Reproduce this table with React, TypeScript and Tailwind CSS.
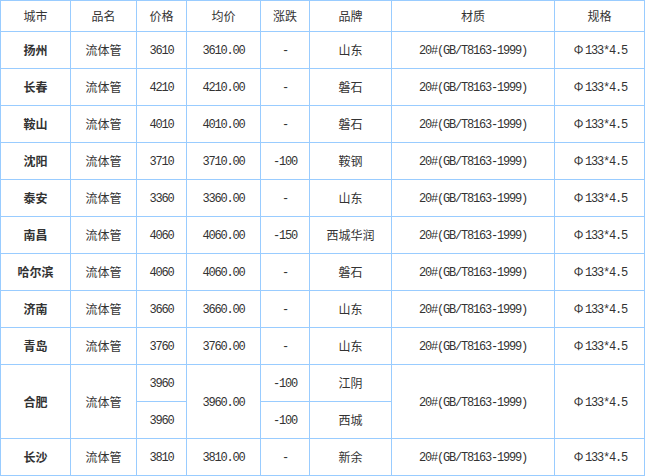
import React from 'react';

type Row = {
  city: string;
  prices: { price: string; change: string; brand: string }[];
  avg: string;
};

const rows: Row[] = [
  { city: '扬州', avg: '3610.00', prices: [{ price: '3610', change: '-', brand: '山东' }] },
  { city: '长春', avg: '4210.00', prices: [{ price: '4210', change: '-', brand: '磐石' }] },
  { city: '鞍山', avg: '4010.00', prices: [{ price: '4010', change: '-', brand: '磐石' }] },
  { city: '沈阳', avg: '3710.00', prices: [{ price: '3710', change: '-100', brand: '鞍钢' }] },
  { city: '泰安', avg: '3360.00', prices: [{ price: '3360', change: '-', brand: '山东' }] },
  { city: '南昌', avg: '4060.00', prices: [{ price: '4060', change: '-150', brand: '西城华润' }] },
  { city: '哈尔滨', avg: '4060.00', prices: [{ price: '4060', change: '-', brand: '磐石' }] },
  { city: '济南', avg: '3660.00', prices: [{ price: '3660', change: '-', brand: '山东' }] },
  { city: '青岛', avg: '3760.00', prices: [{ price: '3760', change: '-', brand: '山东' }] },
  {
    city: '合肥',
    avg: '3960.00',
    prices: [
      { price: '3960', change: '-100', brand: '江阴' },
      { price: '3960', change: '-100', brand: '西城' },
    ],
  },
  { city: '长沙', avg: '3810.00', prices: [{ price: '3810', change: '-', brand: '新余' }] },
];

const cell = 'border border-[#99ccff] text-center align-middle p-0';
const mono = "font-['Liberation_Mono',monospace] tracking-[-1.2px]";

function Num({ children }: { children: React.ReactNode }) {
  return <span className={mono}>{children}</span>;
}

function Spec() {
  return (
    <span>
      <span className="inline-block w-[13px] text-center font-['Noto_Sans_CJK_SC',sans-serif]">Φ</span>
      <Num>133*4.5</Num>
    </span>
  );
}

export default function App() {
  return (
    <div className="bg-white w-[645px] h-[476px] overflow-hidden">
      <table className="border-collapse w-[644px] table-fixed text-[12px] leading-none text-[#333] font-['Noto_Sans_CJK_SC','Noto_Sans',sans-serif]">
        <colgroup>
          <col className="w-[70px]" />
          <col className="w-[66px]" />
          <col className="w-[50px]" />
          <col className="w-[74px]" />
          <col className="w-[49px]" />
          <col className="w-[82px]" />
          <col className="w-[163px]" />
          <col className="w-[90px]" />
        </colgroup>
        <thead>
          <tr className="h-[31px]">
            {['城市', '品名', '价格', '均价', '涨跌', '品牌', '材质', '规格'].map((h) => (
              <th key={h} className={`${cell} font-normal`}>
                {h}
              </th>
            ))}
          </tr>
        </thead>
        <tbody>
          {rows.map((r) =>
            r.prices.map((p, i) => (
              <tr key={r.city + i} className="h-[37px]">
                {i === 0 && (
                  <>
                    <td rowSpan={r.prices.length} className={`${cell} font-bold`}>
                      {r.city}
                    </td>
                    <td rowSpan={r.prices.length} className={cell}>
                      流体管
                    </td>
                  </>
                )}
                <td className={cell}>
                  <Num>{p.price}</Num>
                </td>
                {i === 0 && (
                  <td rowSpan={r.prices.length} className={cell}>
                    <Num>{r.avg}</Num>
                  </td>
                )}
                <td className={cell}>
                  <Num>{p.change}</Num>
                </td>
                <td className={cell}>{p.brand}</td>
                {i === 0 && (
                  <>
                    <td rowSpan={r.prices.length} className={cell}>
                      <Num>20#(GB/T8163-1999)</Num>
                    </td>
                    <td rowSpan={r.prices.length} className={cell}>
                      <Spec />
                    </td>
                  </>
                )}
              </tr>
            ))
          )}
        </tbody>
      </table>
    </div>
  );
}
